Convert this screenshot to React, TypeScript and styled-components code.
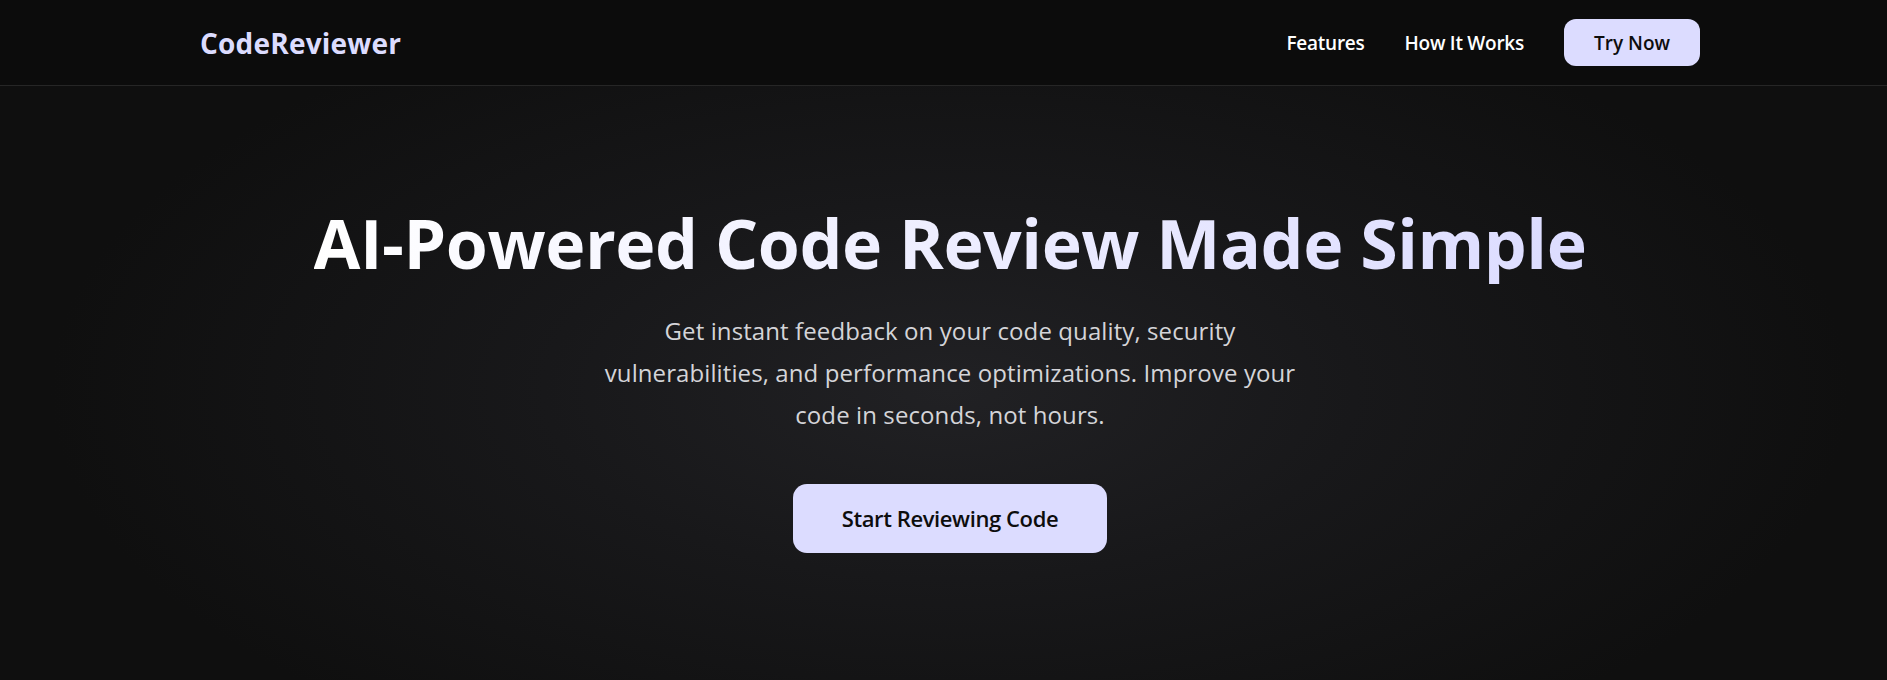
import styled, { createGlobalStyle } from 'styled-components';

// Global reset and page background
const GlobalStyle = createGlobalStyle`
  html, body {
    margin: 0;
    padding: 0;
    background: #0f0f0f;
    overflow-x: hidden;
  }

  * {
    box-sizing: border-box;
  }
`;

const FONT = `"Open Sans", "Noto Sans", "Liberation Sans", sans-serif`;

// Styled Components
const Page = styled.div`
  width: 1900px;
  min-height: 680px;
  font-family: ${FONT};
  color: #ffffff;
  background: radial-gradient(
    ellipse 900px 420px at 950px 390px,
    #212124 0%,
    #18181a 45%,
    #0f0f0f 100%
  );
`;

const Header = styled.header`
  height: 86px;
  background: #0c0c0c;
  border-bottom: 1px solid #262626;
`;

const Container = styled.div`
  max-width: 1500px;
  height: 100%;
  margin: 0 auto;
  display: flex;
  align-items: center;
  justify-content: space-between;
`;

const Logo = styled.a`
  font-size: 28px;
  font-weight: 700;
  color: #dcdcff;
  letter-spacing: 0.2px;
  text-decoration: none;
`;

const NavLinks = styled.nav`
  display: flex;
  align-items: center;
  gap: 40px;
`;

const NavLink = styled.a`
  font-size: 19px;
  font-weight: 600;
  color: #ffffff;
  letter-spacing: -0.25px;
  text-decoration: none;
`;

const Button = styled.button<{ $large?: boolean }>`
  font-family: ${FONT};
  background: #dcdcff;
  color: #0d0d0d;
  border: none;
  cursor: pointer;
  font-weight: 600;
  font-size: ${(p) => (p.$large ? '22px' : '19px')};
  letter-spacing: ${(p) => (p.$large ? '-0.4px' : '0')};
  height: ${(p) => (p.$large ? '69px' : '47px')};
  padding: ${(p) => (p.$large ? '0 49px' : '0 30px')};
  border-radius: ${(p) => (p.$large ? '14px' : '12px')};
`;

const Hero = styled.section`
  display: flex;
  flex-direction: column;
  align-items: center;
  text-align: center;
  padding-top: 116px;
`;

const Title = styled.h1`
  margin: 0;
  font-size: 68px;
  font-weight: 700;
  line-height: 1.2;
  letter-spacing: -0.45px;
  background: linear-gradient(90deg, #ffffff 0%, #dcdcff 100%);
  -webkit-background-clip: text;
  background-clip: text;
  color: transparent;
`;

const Subtitle = styled.p`
  margin: 26px 0 48px;
  max-width: 700px;
  font-size: 24px;
  line-height: 42px;
  letter-spacing: 0.1px;
  color: #d4d4d8;
`;

export default function App() {
  return (
    <>
      <GlobalStyle />
      <Page>
        <Header>
          <Container>
            <Logo href="#">CodeReviewer</Logo>
            <NavLinks>
              <NavLink href="#features">Features</NavLink>
              <NavLink href="#how">How It Works</NavLink>
              <Button>Try Now</Button>
            </NavLinks>
          </Container>
        </Header>
        <Hero>
          <Title>AI-Powered Code Review Made Simple</Title>
          <Subtitle>
            Get instant feedback on your code quality, security vulnerabilities, and performance
            optimizations. Improve your code in seconds, not hours.
          </Subtitle>
          <Button $large>Start Reviewing Code</Button>
        </Hero>
      </Page>
    </>
  );
}
